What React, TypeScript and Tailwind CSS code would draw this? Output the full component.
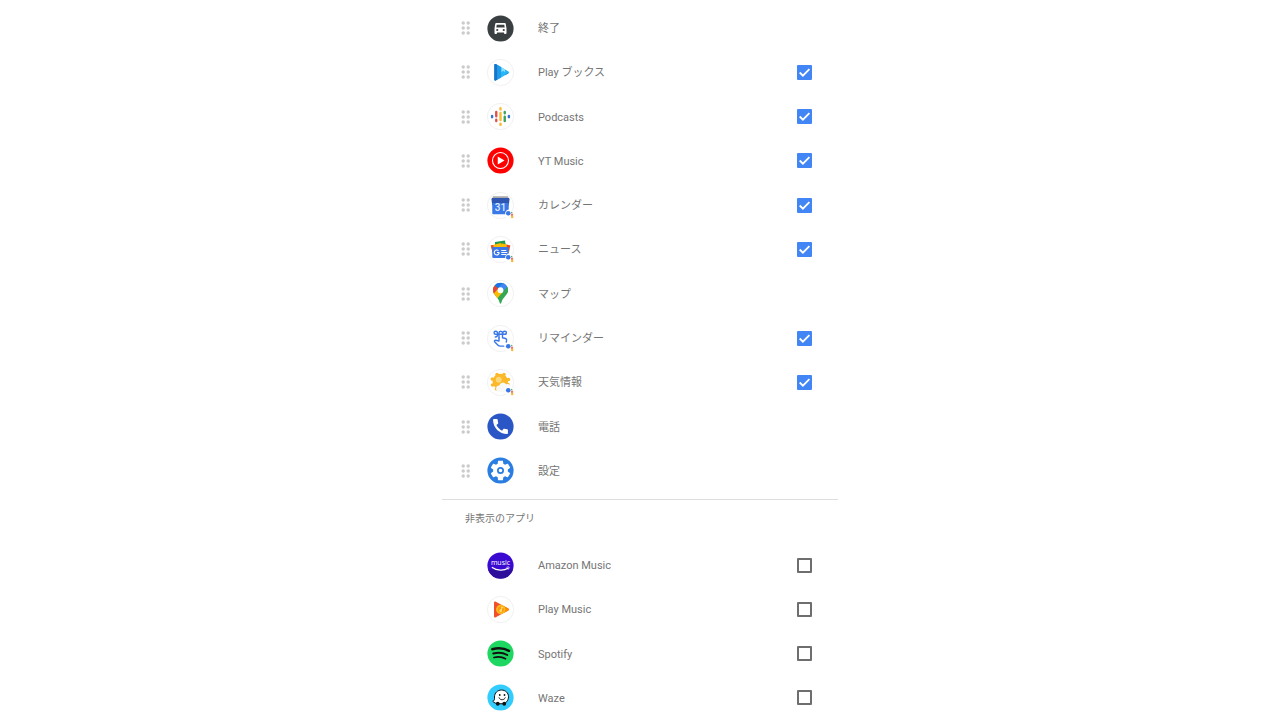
import { useState } from "react";
import type { ReactNode } from "react";
import clsx from "clsx";

type AppEntry = {
  id: string;
  name: string;
  icon: ReactNode;
  // apps without a checkbox are always shown in the launcher
  checked?: boolean;
};

type DiscProps = {
  fill?: string;
  children: ReactNode;
};

function Disc({ fill, children }: DiscProps) {
  return (
    <svg viewBox="0 0 54 54" className="size-[27px] shrink-0" aria-hidden="true">
      <circle
        cx="27"
        cy="27"
        r="26.2"
        fill={fill ?? "#ffffff"}
        stroke={fill ? "none" : "#ececec"}
        strokeWidth="1.6"
      />
      {children}
    </svg>
  );
}

function AssistantBadge() {
  return (
    <g>
      <circle cx="45" cy="44" r="9" fill="#ffffff" />
      <circle cx="42.500" cy="42.500" r="4.600" fill="#3b78e7" />
      <circle cx="49.500" cy="41" r="1.300" fill="#34a853" />
      <circle cx="50" cy="45.500" r="2.500" fill="#ea7b5a" />
      <circle cx="50.400" cy="50" r="2.500" fill="#f5b83d" />
    </g>
  );
}

function ExitIcon() {
  return (
    <Disc fill="#3a4042">
      <path
        fill="#ffffff"
        fillRule="evenodd"
        d="M18.500 16h17c1 0 1.800.7 2 1.600L39 27v9c0 1-.7 1.800-1.700 1.800h-1.600c-1 0-1.700-.8-1.700-1.800v-1.200H20V36c0 1-.7 1.800-1.700 1.800h-1.600c-1 0-1.700-.8-1.700-1.800v-9l1.500-9.400c.2-.9 1-1.600 2-1.600zm1 3.500l-.9 5.500h16.800l-.9-5.500zM20.500 32.200a2.200 2.200 0 1 0 0-4.400 2.200 2.200 0 0 0 0 4.400zm13 0a2.200 2.200 0 1 0 0-4.400 2.200 2.200 0 0 0 0 4.400z"
      />
    </Disc>
  );
}

function PlayBooksIcon() {
  return (
    <Disc>
      <path d="M14.500 12.200c0-2 1.600-2.900 3.200-2L43 25c1.600 1 1.600 2.600 0 3.500L17.700 43c-1.600.9-3.200 0-3.200-1.800z" fill="#29b6f6" />
      <path d="M14.500 12.200c0-2 1.600-2.900 3.200-2L21 12.100v29L17.700 43c-1.600.9-3.200 0-3.200-1.800z" fill="#1a73c9" />
      <path d="M21 12.100l7 4.100v20.900l-7 4z" fill="#1e9be9" />
      <path d="M29 16.800l7 4.100v5.600l-3.500-2.800-3.500 2.800z" fill="#8be3fb" />
      <path d="M36 31.500l5.500-3.900 1.500.9-7 4z" fill="#0d8bd9" />
    </Disc>
  );
}

function PodcastsIcon() {
  return (
    <Disc>
      <g transform="translate(7.800 7.800) scale(1.6)" strokeWidth="3" strokeLinecap="round">
        <path d="M1.500 11.200v1.600M22.500 11.200v1.600" stroke="#3474d4" />
        <path d="M6.700 6.300v5.300M6.700 16.100v1.600" stroke="#dd5347" />
        <path d="M17.300 6.300v1.600M17.300 12.400v5.300" stroke="#3da35a" />
        <path d="M12 1.500v1.600M12 7.600v8.800M12 20.900v1.600" stroke="#f9b934" />
      </g>
    </Disc>
  );
}

function YtMusicIcon() {
  return (
    <Disc fill="#ff0000">
      <circle cx="27" cy="27" r="16" fill="none" stroke="#ffffff" strokeWidth="2.2" />
      <path d="M21.500 19v16L35 27z" fill="#ffffff" />
    </Disc>
  );
}

function CalendarIcon() {
  return (
    <Disc>
      <path d="M12 8.500h30l2 6H10z" fill="#a9a9a9" />
      <path d="M9 14.500c0-1.500 1-2.500 2.500-2.500h31c1.500 0 2.500 1 2.500 2.500L43.500 27h-33z" fill="#2f56b0" />
      <path d="M10.500 22h33v20.500c0 1-.8 1.900-1.900 1.900H12.400c-1.100 0-1.900-.9-1.900-1.900z" fill="#3b78e7" />
      <text
        x="27"
        y="37"
        textAnchor="middle"
        fontFamily="Roboto, sans-serif"
        fontSize="20"
        fontWeight="500"
        fill="#dfeaff"
      >
        31
      </text>
      <AssistantBadge />
    </Disc>
  );
}

function NewsIcon() {
  return (
    <Disc>
      <path d="M16 12l20-3 2 14H16z" fill="#219a4b" />
      <path d="M7.500 19l20-5 4 14-20 6z" fill="#fbbc04" />
      <path d="M7.500 19l5-1.200L14 30l-2.500 4z" fill="#ea4335" />
      <path d="M46.500 19L29 14.500 24 28l20 6z" fill="#fbbc04" />
      <path d="M39 17l7.500 2L44 30h-4z" fill="#ea4335" />
      <rect x="10.500" y="22" width="33" height="22" rx="2" fill="#3b78e7" />
      <path
        d="M24.500 33h-4.500M24.500 33a5 5 0 1 1-1.500-3.700"
        fill="none"
        stroke="#ffffff"
        strokeWidth="2.2"
      />
      <path d="M28.500 29h10M28.500 33h12M28.500 37h10" stroke="#ffffff" strokeWidth="2" />
      <AssistantBadge />
    </Disc>
  );
}

function MapsIcon() {
  return (
    <Disc>
      <clipPath id="maps-pin">
        <path d="M27 5.500c-8.600 0-15 6.600-15 14.600 0 4.200 1.600 7.400 4.200 10.500 4 4.800 7 7.500 8.700 13.500.6 2.100 1 3.400 2.100 3.400s1.500-1.300 2.100-3.400c1.700-6 4.700-8.700 8.700-13.500 2.600-3.100 4.200-6.300 4.200-10.500 0-8-6.400-14.600-15-14.600z" />
      </clipPath>
      <g clipPath="url(#maps-pin)">
        <path d="M0 0h54v54H0z" fill="#34a853" />
        <path d="M31.500 24L17 41 0 32V20l14-2z" fill="#fbbc04" />
        <path d="M22.500 16.500L13 28 5 22l10.500-11.500z" fill="#ea4335" />
        <path d="M15.500 10.800l7 5.900L38 0H20z" fill="#1a73e8" />
        <path d="M22.500 16.700L34 3l9 10-11.500 11z" fill="#4285f4" />
        <path d="M31.500 24L41 13h6v20z" fill="#34a853" />
      </g>
      <circle cx="27" cy="20.500" r="5.800" fill="#ffffff" />
    </Disc>
  );
}

function ReminderIcon() {
  return (
    <Disc>
      <g
        fill="none"
        stroke="#3b78e7"
        strokeWidth="2.8"
        strokeLinecap="round"
        strokeLinejoin="round"
      >
        <path d="M24 26V16c0-4.800 7-4.800 7 0v9.500l6 1.500c2 .6 2.600 2 2.200 4L38.500 34" />
        <path d="M24 26v6l-6.500-1.500c-2.500-.2-3.500 2-1.800 3.700L22 40.500c1.200 1.200 2.500 1.800 4.500 1.800h7" />
        <path d="M38 18.500H17.500c-4.500 0-4.500-6 0-6 3 0 4 3 4 6s-1.500 5.500-5 5.500M31 18.500c0-3.500 1.500-6 4.500-6 4.500 0 4.500 6 0 6" />
      </g>
      <AssistantBadge />
    </Disc>
  );
}

function WeatherIcon() {
  return (
    <Disc>
      <g fill="#fbb829">
        <circle cx="26.500" cy="25" r="15.500" />
        <circle cx="20" cy="11" r="3.500" />
        <circle cx="34" cy="11" r="3.500" />
        <circle cx="43" cy="21" r="3.500" />
        <circle cx="10.500" cy="20" r="3.500" />
        <circle cx="11" cy="32" r="3.500" />
        <circle cx="19" cy="40" r="3.500" />
        <circle cx="42" cy="31" r="3.500" />
      </g>
      <circle cx="23.500" cy="21.500" r="5.800" fill="#fcd77c" />
      <path
        d="M25 46a6.500 6.500 0 0 1-.5-13 7.500 7.500 0 0 1 13.500-2.500A7.400 7.400 0 0 1 44 46z"
        fill="#f8f8f8"
      />
      <AssistantBadge />
    </Disc>
  );
}

function PhoneIcon() {
  return (
    <Disc fill="#2a56c6">
      <path
        transform="translate(7.2 7.2) scale(1.65)"
        fill="#ffffff"
        d="M20.010 15.380c-1.230 0-2.420-.2-3.530-.56-.35-.12-.74-.03-1.010.24l-1.570 1.970c-2.830-1.350-5.480-3.900-6.890-6.830l1.950-1.660c.27-.28.35-.67.24-1.020-.37-1.110-.56-2.300-.56-3.530 0-.54-.45-.99-.99-.99H4.190C3.650 3 3 3.240 3 3.990 3 13.280 10.730 21 20.010 21c.71 0 .99-.63.99-1.180v-3.450c0-.54-.45-.99-.99-.99z"
      />
    </Disc>
  );
}

function SettingsIcon() {
  return (
    <Disc fill="#2a7de1">
      <path
        transform="translate(2.4 2.4) scale(2.05)"
        fill="#ffffff"
        d="M19.140 12.940c.04-.3.06-.61.06-.94 0-.32-.02-.64-.07-.94l2.030-1.580c.18-.14.23-.41.12-.61l-1.920-3.320c-.12-.22-.37-.29-.59-.22l-2.390.96c-.5-.38-1.030-.7-1.620-.94l-.36-2.540c-.04-.24-.24-.41-.48-.41h-3.840c-.24 0-.43.17-.47.41l-.36 2.540c-.59.24-1.130.57-1.620.94l-2.390-.96c-.22-.08-.47 0-.59.22L2.740 8.870c-.12.21-.08.47.12.61l2.030 1.580c-.05.3-.09.63-.09.94s.02.64.07.94l-2.030 1.580c-.18.14-.23.41-.12.61l1.920 3.320c.12.22.37.29.59.22l2.390-.96c.5.38 1.030.7 1.620.94l.36 2.540c.05.24.24.41.48.41h3.840c.24 0 .44-.17.47-.41l.36-2.540c.59-.24 1.130-.56 1.620-.94l2.390.96c.22.08.47 0 .59-.22l1.920-3.320c.12-.22.07-.47-.12-.61l-2.010-1.580z"
      />
      <circle cx="27" cy="27" r="5.300" fill="#ffffff" stroke="#2a7de1" strokeWidth="3.4" />
    </Disc>
  );
}

function AmazonMusicIcon() {
  return (
    <Disc fill="#3a0ad0">
      <path d="M2 35a26.200 26.200 0 0 0 50 0z" fill="#2e0f9c" />
      <text
        x="27"
        y="26"
        textAnchor="middle"
        fontFamily="'Open Sans', sans-serif"
        fontSize="14"
        fill="#ffffff"
      >
        music
      </text>
      <path
        d="M10.500 31c9 6.500 23 7 31.500 1.500"
        fill="none"
        stroke="#ffffff"
        strokeWidth="2.4"
        strokeLinecap="round"
      />
      <path
        d="M39.500 30.500c2-.8 4.500-.8 4.800-.2.200 1-.5 3-1.800 4.500"
        fill="none"
        stroke="#ffffff"
        strokeWidth="1.4"
        strokeLinecap="round"
      />
    </Disc>
  );
}

function PlayMusicIcon() {
  return (
    <Disc>
      <path d="M14 13.500c0-2.300 1.600-3.300 3.600-2.200L42.500 25c1.800 1 1.800 2.900 0 3.900L17.600 42.700c-2 1.100-3.600.1-3.600-2.200z" fill="#f0502a" />
      <path d="M34 20.400L42.500 25c1.800 1 1.800 2.900 0 3.900L34 33.600z" fill="#fb8c00" />
      <circle cx="27.500" cy="27" r="9.500" fill="#ffb81f" />
      <circle cx="27.500" cy="27" r="6" fill="#fb9a0e" />
      <path d="M28.200 22h3.800v2.400h-2v5a2.600 2.600 0 1 1-1.800-2.500z" fill="#ffdf70" />
    </Disc>
  );
}

function SpotifyIcon() {
  return (
    <Disc fill="#1ed760">
      <g fill="none" stroke="#111111" strokeLinecap="round">
        <path d="M10.500 18.500c11-3.200 24-2.200 33.500 3.200" strokeWidth="4.800" />
        <path d="M12.500 27c9.500-2.700 20-1.600 28 3" strokeWidth="4" />
        <path d="M14 35c8-2 16.500-1.200 23 2.600" strokeWidth="3.3" />
      </g>
    </Disc>
  );
}

function WazeIcon() {
  return (
    <Disc fill="#33ccff">
      <path
        d="M11.500 34.500c2.800-.8 3.500-3 3.500-6V26C15 17.500 21.500 12 29 12s14 5.500 14 13.500S37.500 39.500 30 39.500h-6c-5.500 0-10-1.800-12.500-5z"
        fill="#ffffff"
        stroke="#111111"
        strokeWidth="2"
        strokeLinejoin="round"
      />
      <circle cx="21.500" cy="39.500" r="3.800" fill="#111111" />
      <circle cx="34.500" cy="39.500" r="3.800" fill="#111111" />
      <circle cx="25.500" cy="22" r="1.800" fill="#111111" />
      <circle cx="35" cy="22" r="1.800" fill="#111111" />
      <path
        d="M24 27.500c1.500 5.500 11 5.500 12.500 0"
        fill="none"
        stroke="#111111"
        strokeWidth="1.8"
        strokeLinecap="round"
      />
    </Disc>
  );
}

const SHOWN_APPS: AppEntry[] = [
  { id: "exit", name: "終了", icon: <ExitIcon /> },
  { id: "books", name: "Play ブックス", icon: <PlayBooksIcon />, checked: true },
  { id: "podcasts", name: "Podcasts", icon: <PodcastsIcon />, checked: true },
  { id: "yt-music", name: "YT Music", icon: <YtMusicIcon />, checked: true },
  { id: "calendar", name: "カレンダー", icon: <CalendarIcon />, checked: true },
  { id: "news", name: "ニュース", icon: <NewsIcon />, checked: true },
  { id: "maps", name: "マップ", icon: <MapsIcon /> },
  { id: "reminder", name: "リマインダー", icon: <ReminderIcon />, checked: true },
  { id: "weather", name: "天気情報", icon: <WeatherIcon />, checked: true },
  { id: "phone", name: "電話", icon: <PhoneIcon /> },
  { id: "settings", name: "設定", icon: <SettingsIcon /> },
];

const HIDDEN_APPS: AppEntry[] = [
  { id: "amazon-music", name: "Amazon Music", icon: <AmazonMusicIcon />, checked: false },
  { id: "play-music", name: "Play Music", icon: <PlayMusicIcon />, checked: false },
  { id: "spotify", name: "Spotify", icon: <SpotifyIcon />, checked: false },
  { id: "waze", name: "Waze", icon: <WazeIcon />, checked: false },
];

function DragHandle({ name }: { name: string }) {
  return (
    <button type="button" aria-label={`${name}を並べ替え`} className="w-4 shrink-0 cursor-grab">
      <svg viewBox="0 0 16 16" className="size-4" fill="#cbcbcb" aria-hidden="true">
        {[3, 8, 13].map((y) => (
          <g key={y}>
            <circle cx="4.2" cy={y} r="1.7" />
            <circle cx="9.2" cy={y} r="1.7" />
          </g>
        ))}
      </svg>
    </button>
  );
}

type AppRowProps = {
  app: AppEntry;
  draggable?: boolean;
};

function AppRow({ app, draggable = false }: AppRowProps) {
  const [checked, setChecked] = useState(app.checked ?? false);
  const hasCheckbox = app.checked !== undefined;

  return (
    <li className="flex items-center pr-[26px] pl-[17px]">
      {draggable ? <DragHandle name={app.name} /> : <span className="w-4 shrink-0" />}
      <span className="ml-3">{app.icon}</span>
      {hasCheckbox ? (
        <>
          <label htmlFor={app.id} className="ml-6 flex-1 pt-0.5 text-[11px] leading-4">
            {app.name}
          </label>
          <span className="relative flex size-[15px] shrink-0">
            <input
              id={app.id}
              type="checkbox"
              checked={checked}
              onChange={(e) => setChecked(e.target.checked)}
              className={clsx(
                "size-full appearance-none rounded-[1px] border-2",
                checked ? "border-[#4285f4] bg-[#4285f4]" : "border-[#6e6e6e] bg-white",
              )}
            />
            {checked && (
              <svg
                viewBox="0 0 15 15"
                className="pointer-events-none absolute inset-0 size-full"
                fill="none"
                stroke="#ffffff"
                strokeWidth="1.8"
                aria-hidden="true"
              >
                <path d="M2.700 7.500l3.200 3.200 6.500-6.600" />
              </svg>
            )}
          </span>
        </>
      ) : (
        <span className="ml-6 flex-1 pt-0.5 text-[11px] leading-4">{app.name}</span>
      )}
    </li>
  );
}

export default function App() {
  return (
    <div className="min-h-screen bg-white font-[Roboto,'Noto_Sans_CJK_JP',sans-serif] text-[#757575]">
      <main lang="ja" className="mx-auto w-full max-w-[396px] pt-1.5">
        <ul className="grid min-h-[487px] auto-rows-fr">
          {SHOWN_APPS.map((app) => (
            <AppRow key={app.id} app={app} draggable />
          ))}
        </ul>
        <section className="mt-1.5 border-t border-[#dedede] pt-[11px]">
          <h2 className="pl-[23px] text-[10px] leading-4">非表示のアプリ</h2>
          <ul className="mt-4 grid min-h-[177px] auto-rows-fr">
            {HIDDEN_APPS.map((app) => (
              <AppRow key={app.id} app={app} />
            ))}
          </ul>
        </section>
      </main>
    </div>
  );
}
